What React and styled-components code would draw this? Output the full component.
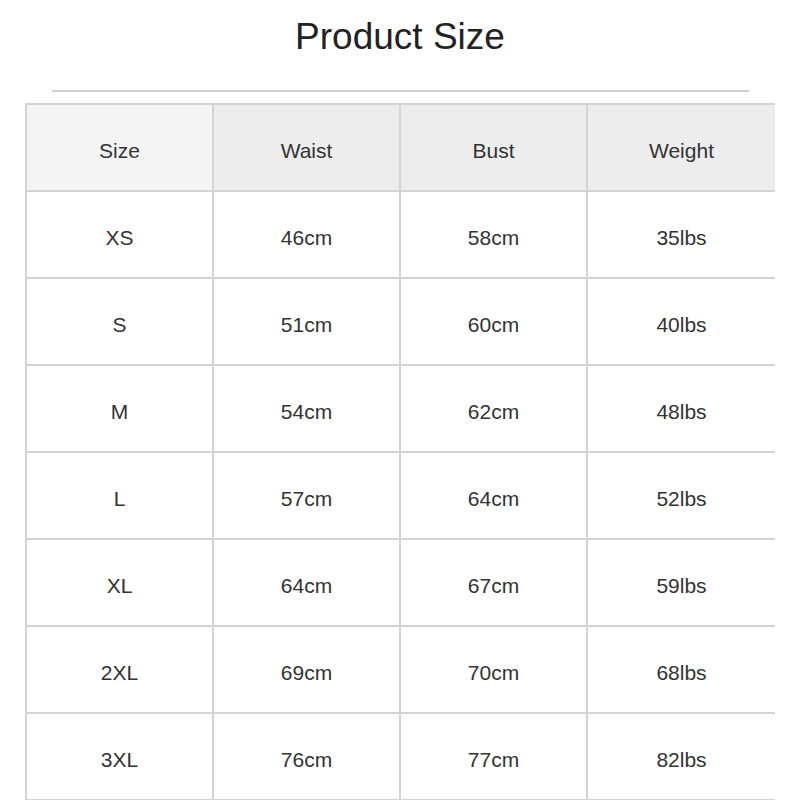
import React from 'react'
import styled, { createGlobalStyle } from 'styled-components'

const GlobalStyle = createGlobalStyle`
  body {
    margin: 0;
    background: #fff;
    font-family: "Liberation Sans", Arial, sans-serif;
  }
`

const columns = ['Size', 'Waist', 'Bust', 'Weight']

const rows = [
  ['XS', '46cm', '58cm', '35lbs'],
  ['S', '51cm', '60cm', '40lbs'],
  ['M', '54cm', '62cm', '48lbs'],
  ['L', '57cm', '64cm', '52lbs'],
  ['XL', '64cm', '67cm', '59lbs'],
  ['2XL', '69cm', '70cm', '68lbs'],
  ['3XL', '76cm', '77cm', '82lbs'],
]

const App = () => {
  return (
    <Page>
      <GlobalStyle />
      <Title>Product Size</Title>
      <Divider />
      <Table>
        {columns.map((c, i) => (
          <Cell key={c} head first={i === 0} last={i === columns.length - 1}>{c}</Cell>
        ))}
        {rows.map((r) =>
          r.map((v, i) => (
            <Cell key={r[0] + i} last={i === r.length - 1}>{v}</Cell>
          ))
        )}
      </Table>
    </Page>
  )
}

export default App

const Page = styled.div`
  width: 800px;
  display: flex;
  flex-direction: column;
`
const Title = styled.h1`
  margin: 0;
  padding-top: 3px;
  height: 67px;
  line-height: 67px;
  text-align: center;
  font-size: 37px;
  font-weight: normal;
  color: #222;
`
const Divider = styled.div`
  margin: 20px 51px 0 52px;
  height: 2px;
  background: #cfcfcf;
`
const Table = styled.div`
  margin: 11px 0 0 25px;
  width: 750px;
  display: grid;
  grid-template-columns: repeat(4, 187px);
  border-top: 2px solid #d3d3d3;
  border-left: 2px solid #d3d3d3;
  box-sizing: border-box;
`
const Cell = styled.div`
  height: 87px;
  padding-top: 6px;
  box-sizing: border-box;
  display: flex;
  align-items: center;
  justify-content: center;
  font-size: 21px;
  color: #333;
  border-bottom: 2px solid #d3d3d3;
  border-right: ${(p) => (p.last ? 'none' : '2px solid #d3d3d3')};
  background: ${(p) => (p.head ? (p.first ? '#f4f4f4' : '#ededed') : '#fff')};
`
